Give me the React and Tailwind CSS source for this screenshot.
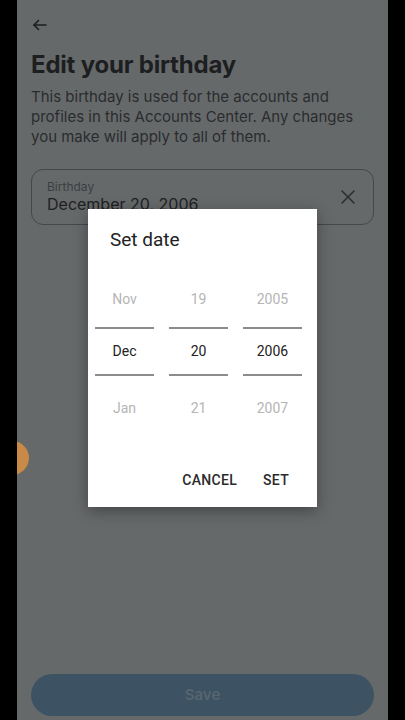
import React from 'react';

const Column = ({ items }) => (
  <div className="flex w-[59px] flex-col items-center">
    <div className="flex h-[56px] items-center text-[14px] text-[#b5b5b5]">{items[0]}</div>
    <div className="h-[2px] w-full bg-[#8c8c8c]" />
    <div className="flex h-[45px] items-center text-[14px] text-[#222]">{items[1]}</div>
    <div className="h-[2px] w-full bg-[#8c8c8c]" />
    <div className="flex h-[64px] items-center text-[14px] text-[#b5b5b5]">{items[2]}</div>
  </div>
);

export default function App() {
  return (
    <div className="flex h-[720px] w-[405px] bg-black font-['Inter',sans-serif]">
      <div className="relative ml-[17px] flex h-full w-[371px] flex-col overflow-hidden bg-[#66696a] px-[14px]">
        {/* back arrow */}
        <div className="pt-[16px]">
          <svg width="18" height="18" viewBox="0 0 24 24" fill="none" stroke="#1d1f20" strokeWidth="2.2" strokeLinecap="round" strokeLinejoin="round">
            <path d="M20 12H4" />
            <path d="M10 6l-6 6 6 6" />
          </svg>
        </div>

        <h1 className="mt-[16px] text-[24px] font-bold leading-[30px] tracking-[-0.2px] text-[#1c1e1f]">
          Edit your birthday
        </h1>
        <p className="mt-[7px] text-[15px] leading-[20px] text-[#2a2c2e]">
          This birthday is used for the accounts and profiles in this Accounts Center. Any changes you make will apply to all of them.
        </p>

        {/* birthday field */}
        <div className="mt-[22px] flex h-[56px] items-center rounded-[12px] border border-[#45484a] pl-[15px] pr-[16px]">
          <div className="flex flex-1 flex-col">
            <span className="text-[12px] leading-[15px] text-[#3c3f41]">Birthday</span>
            <span className="text-[16px] leading-[21px] text-[#1e2021]">December 20, 2006</span>
          </div>
          <svg width="18" height="18" viewBox="0 0 24 24" fill="none" stroke="#2a2c2e" strokeWidth="2" strokeLinecap="round">
            <path d="M4 4l16 16M20 4L4 20" />
          </svg>
        </div>

        <div className="flex-1" />

        {/* save */}
        <div className="mb-[4px] flex h-[42px] items-center justify-center rounded-full bg-[#3d5262] text-[15px] font-semibold text-[#56656e]">
          Save
        </div>

        {/* floating bubble */}
        <div className="absolute left-[-22px] top-[441px] h-[34px] w-[34px] rounded-full bg-[#c98a47]" />

        {/* dialog */}
        <div className="absolute left-[71px] top-[209px] flex h-[298px] w-[229px] flex-col bg-white font-['Roboto',sans-serif] shadow-[0_4px_14px_rgba(0,0,0,0.35)]">
          <div className="pl-[22px] pt-[19px] text-[19px] leading-[24px] text-[#212121]">Set date</div>
          <div className="mt-[19px] flex gap-[15px] pl-[7px]">
            <Column items={['Nov', 'Dec', 'Jan']} />
            <Column items={['19', '20', '21']} />
            <Column items={['2005', '2006', '2007']} />
          </div>
          <div className="mt-[30px] flex justify-end gap-[26px] pr-[28px] text-[14px] font-medium tracking-[0.3px] text-[#2b2b2b]">
            <span>CANCEL</span>
            <span>SET</span>
          </div>
        </div>
      </div>
    </div>
  );
}
